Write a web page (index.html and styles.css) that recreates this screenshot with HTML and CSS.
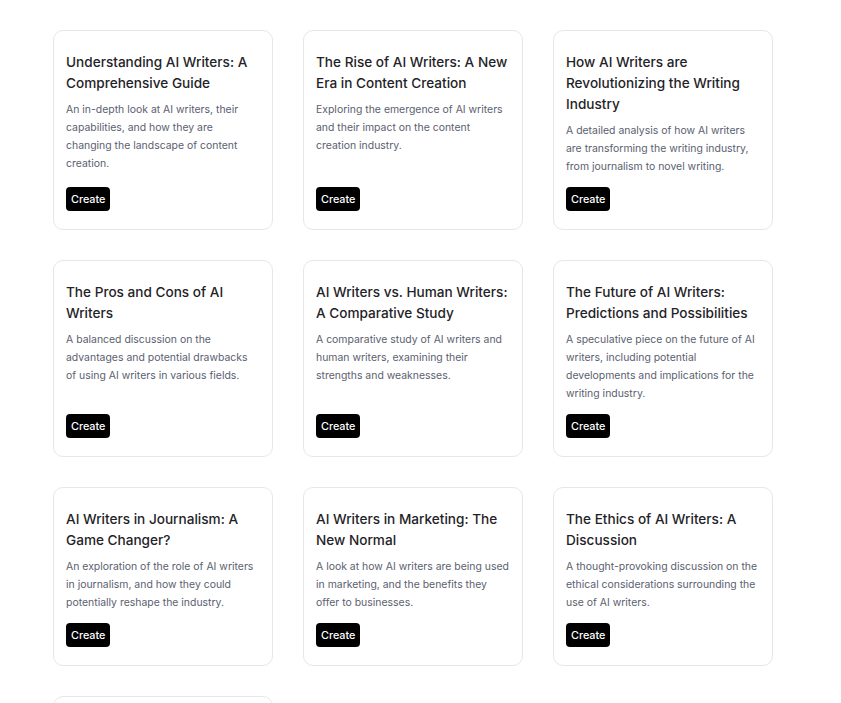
FILE: index.html
```html
<!DOCTYPE html>
<html lang="en">
<head>
<meta charset="utf-8">
<title>AI Writers</title>
<link rel="stylesheet" href="styles.css">
</head>
<body>
<main class="grid">
  <div class="card">
    <h3 class="title">Understanding AI Writers: A Comprehensive Guide</h3>
    <p class="desc">An in-depth look at AI writers, their capabilities, and how they are changing the landscape of content creation.</p>
    <button class="btn">Create</button>
  </div>
  <div class="card">
    <h3 class="title">The Rise of AI Writers: A New Era in Content Creation</h3>
    <p class="desc">Exploring the emergence of AI writers and their impact on the content creation industry.</p>
    <button class="btn">Create</button>
  </div>
  <div class="card">
    <h3 class="title">How AI Writers are Revolutionizing the Writing Industry</h3>
    <p class="desc">A detailed analysis of how AI writers are transforming the writing industry, from journalism to novel writing.</p>
    <button class="btn">Create</button>
  </div>
  <div class="card">
    <h3 class="title">The Pros and Cons of AI Writers</h3>
    <p class="desc">A balanced discussion on the advantages and potential drawbacks of using AI writers in various fields.</p>
    <button class="btn">Create</button>
  </div>
  <div class="card">
    <h3 class="title">AI Writers vs. Human Writers: A Comparative Study</h3>
    <p class="desc">A comparative study of AI writers and human writers, examining their strengths and weaknesses.</p>
    <button class="btn">Create</button>
  </div>
  <div class="card">
    <h3 class="title">The Future of AI Writers: Predictions and Possibilities</h3>
    <p class="desc">A speculative piece on the future of AI writers, including potential developments and implications for the writing industry.</p>
    <button class="btn">Create</button>
  </div>
  <div class="card">
    <h3 class="title">AI Writers in Journalism: A Game Changer?</h3>
    <p class="desc">An exploration of the role of AI writers in journalism, and how they could potentially reshape the industry.</p>
    <button class="btn">Create</button>
  </div>
  <div class="card">
    <h3 class="title">AI Writers in Marketing: The New Normal</h3>
    <p class="desc">A look at how AI writers are being used in marketing, and the benefits they offer to businesses.</p>
    <button class="btn">Create</button>
  </div>
  <div class="card">
    <h3 class="title">The Ethics of AI Writers: A Discussion</h3>
    <p class="desc">A thought-provoking discussion on the ethical considerations surrounding the use of AI writers.</p>
    <button class="btn">Create</button>
  </div>
  <div class="card card-last">
  </div>
</main>
</body>
</html>
```

FILE: styles.css
```css
* { box-sizing: border-box; }
html, body { margin: 0; padding: 0; background: #ffffff; }
body {
  font-family: Inter, "Noto Sans", "Liberation Sans", sans-serif;
  color: #1f2328;
}
.grid {
  display: grid;
  grid-template-columns: repeat(3, 220px);
  column-gap: 30px;
  row-gap: 30px;
  padding: 30px 0 0 53px;
}
.card {
  display: flex;
  flex-direction: column;
  align-items: flex-start;
  border: 1px solid #e5e7eb;
  border-radius: 10px;
  padding: 21px 12px 18px 12px;
  background: #fff;
}
.card-last {
  height: 180px;
}
.title {
  margin: 0;
  font-size: 13.6px;
  line-height: 21px;
  font-weight: 500;
  color: #1f2328;
}
.desc {
  margin: 7px 0 11px 0;
  font-size: 10.45px;
  line-height: 18px;
  color: #5b6170;
}
.btn {
  margin-top: auto;
  background: #000;
  color: #fff;
  border: none;
  border-radius: 4px;
  font-family: Inter, "Noto Sans", sans-serif;
  font-size: 10.8px;
  font-weight: 500;
  height: 24px;
  padding: 0 5px;
  cursor: pointer;
}
```
